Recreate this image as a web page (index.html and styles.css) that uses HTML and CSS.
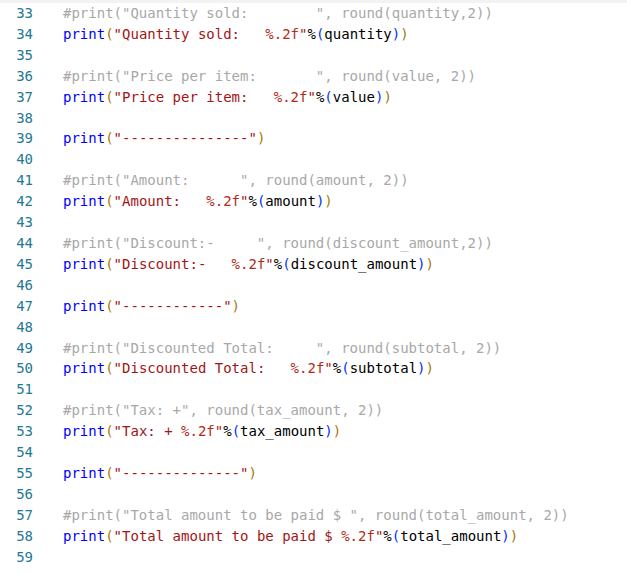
FILE: index.html
```html
<!DOCTYPE html>
<html>
<head>
<meta charset="utf-8">
<link rel="stylesheet" href="styles.css">
</head>
<body>
<div class="topbar"></div>
<div class="editor">
<div class="line"><span class="ln">33</span><span class="code"><span class="c">#print("Quantity sold:        ", round(quantity,2))</span></span></div>
<div class="line"><span class="ln">34</span><span class="code"><span class="f">print</span><span class="b1">(</span><span class="s">"Quantity sold:   </span><span class="fmt">%.2f</span><span class="s">"</span>%<span class="b2">(</span>quantity<span class="b2">)</span><span class="b1">)</span></span></div>
<div class="line"><span class="ln">35</span><span class="code"></span></div>
<div class="line"><span class="ln">36</span><span class="code"><span class="c">#print("Price per item:       ", round(value, 2))</span></span></div>
<div class="line"><span class="ln">37</span><span class="code"><span class="f">print</span><span class="b1">(</span><span class="s">"Price per item:   </span><span class="fmt">%.2f</span><span class="s">"</span>%<span class="b2">(</span>value<span class="b2">)</span><span class="b1">)</span></span></div>
<div class="line"><span class="ln">38</span><span class="code"></span></div>
<div class="line"><span class="ln">39</span><span class="code"><span class="f">print</span><span class="b1">(</span><span class="s">"---------------"</span><span class="b1">)</span></span></div>
<div class="line"><span class="ln">40</span><span class="code"></span></div>
<div class="line"><span class="ln">41</span><span class="code"><span class="c">#print("Amount:      ", round(amount, 2))</span></span></div>
<div class="line"><span class="ln">42</span><span class="code"><span class="f">print</span><span class="b1">(</span><span class="s">"Amount:   </span><span class="fmt">%.2f</span><span class="s">"</span>%<span class="b2">(</span>amount<span class="b2">)</span><span class="b1">)</span></span></div>
<div class="line"><span class="ln">43</span><span class="code"></span></div>
<div class="line"><span class="ln">44</span><span class="code"><span class="c">#print("Discount:-     ", round(discount_amount,2))</span></span></div>
<div class="line"><span class="ln">45</span><span class="code"><span class="f">print</span><span class="b1">(</span><span class="s">"Discount:-   </span><span class="fmt">%.2f</span><span class="s">"</span>%<span class="b2">(</span>discount_amount<span class="b2">)</span><span class="b1">)</span></span></div>
<div class="line"><span class="ln">46</span><span class="code"></span></div>
<div class="line"><span class="ln">47</span><span class="code"><span class="f">print</span><span class="b1">(</span><span class="s">"------------"</span><span class="b1">)</span></span></div>
<div class="line"><span class="ln">48</span><span class="code"></span></div>
<div class="line"><span class="ln">49</span><span class="code"><span class="c">#print("Discounted Total:     ", round(subtotal, 2))</span></span></div>
<div class="line"><span class="ln">50</span><span class="code"><span class="f">print</span><span class="b1">(</span><span class="s">"Discounted Total:   </span><span class="fmt">%.2f</span><span class="s">"</span>%<span class="b2">(</span>subtotal<span class="b2">)</span><span class="b1">)</span></span></div>
<div class="line"><span class="ln">51</span><span class="code"></span></div>
<div class="line"><span class="ln">52</span><span class="code"><span class="c">#print("Tax: +", round(tax_amount, 2))</span></span></div>
<div class="line"><span class="ln">53</span><span class="code"><span class="f">print</span><span class="b1">(</span><span class="s">"Tax: + </span><span class="fmt">%.2f</span><span class="s">"</span>%<span class="b2">(</span>tax_amount<span class="b2">)</span><span class="b1">)</span></span></div>
<div class="line"><span class="ln">54</span><span class="code"></span></div>
<div class="line"><span class="ln">55</span><span class="code"><span class="f">print</span><span class="b1">(</span><span class="s">"--------------"</span><span class="b1">)</span></span></div>
<div class="line"><span class="ln">56</span><span class="code"></span></div>
<div class="line"><span class="ln">57</span><span class="code"><span class="c">#print("Total amount to be paid $ ", round(total_amount, 2))</span></span></div>
<div class="line"><span class="ln">58</span><span class="code"><span class="f">print</span><span class="b1">(</span><span class="s">"Total amount to be paid $ </span><span class="fmt">%.2f</span><span class="s">"</span>%<span class="b2">(</span>total_amount<span class="b2">)</span><span class="b1">)</span></span></div>
<div class="line"><span class="ln">59</span><span class="code"></span></div>
</div>
</body>
</html>
```
FILE: styles.css
```css
html, body {
  margin: 0;
  padding: 0;
  background: #ffffff;
}
.topbar {
  height: 3px;
  background: #f3f3f3;
}
.editor {
  font-family: "DejaVu Sans Mono", "Liberation Mono", monospace;
  font-size: 14px;
  color: #000000;
}
.line {
  display: flex;
  height: 20.92px;
  line-height: 20.92px;
  white-space: pre;
}
.ln {
  width: 33px;
  flex: none;
  text-align: right;
  color: #237893;
}
.code {
  padding-left: 30px;
}
.c { color: #a8a8a8; }
.f { color: #0000ff; }
.s { color: #a31515; }
.fmt { color: #b22a1a; }
.b1 { color: #a57a0b; }
.b2 { color: #0431fa; }
```
